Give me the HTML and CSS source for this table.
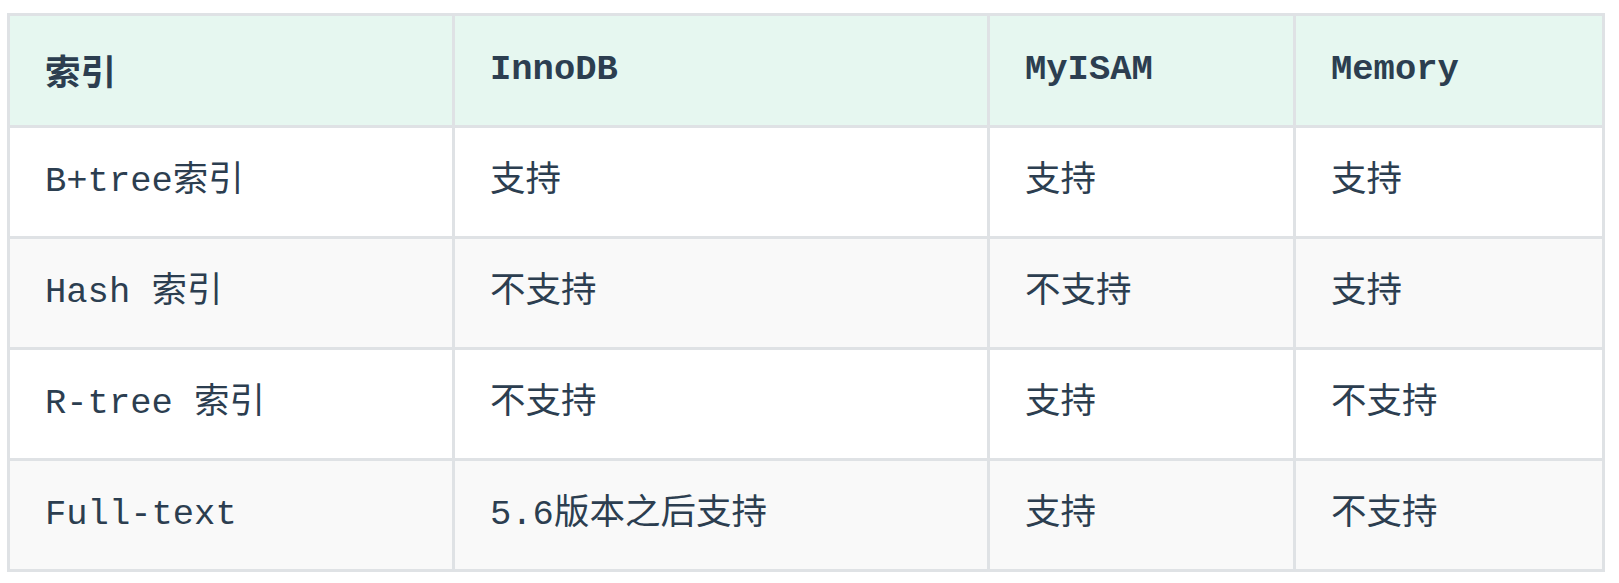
FILE: index.html
```html
<!DOCTYPE html>
<html lang="zh-CN">
<head>
<meta charset="utf-8">
<title>索引对比</title>
<link rel="stylesheet" href="styles.css">
</head>
<body>
<table class="cmp">
  <colgroup>
    <col class="c1"><col class="c2"><col class="c3"><col class="c4">
  </colgroup>
  <thead>
    <tr class="head">
      <th class="cjk">索引</th>
      <th>InnoDB</th>
      <th>MyISAM</th>
      <th>Memory</th>
    </tr>
  </thead>
  <tbody>
    <tr class="odd">
      <td>B+tree索引</td>
      <td>支持</td>
      <td>支持</td>
      <td>支持</td>
    </tr>
    <tr class="even">
      <td>Hash 索引</td>
      <td>不支持</td>
      <td>不支持</td>
      <td>支持</td>
    </tr>
    <tr class="odd">
      <td>R-tree 索引</td>
      <td>不支持</td>
      <td>支持</td>
      <td>不支持</td>
    </tr>
    <tr class="even">
      <td>Full-text</td>
      <td>5.6版本之后支持</td>
      <td>支持</td>
      <td>不支持</td>
    </tr>
  </tbody>
</table>
</body>
</html>
```

FILE: styles.css
```css
html, body {
  margin: 0;
  padding: 0;
  background: #ffffff;
}

body {
  padding: 13px 0 0 7px;
}

.cmp {
  border-collapse: separate;
  border-spacing: 0;
  table-layout: fixed;
  width: 1598px;
  border-left: 3px solid #dfe2e5;
  border-top: 3px solid #dfe2e5;
  font-family: "Courier New", "Nimbus Mono PS", "Nimbus Mono L", "FreeMono", "Liberation Mono", "Noto Sans CJK SC", monospace;
  font-size: 35.5px;
  color: #2c3e50;
}

.c1 { width: 445px; }
.c2 { width: 535px; }
.c3 { width: 306px; }
.c4 { width: 309px; }

.cmp th,
.cmp td {
  box-sizing: border-box;
  border-right: 3px solid #dfe2e5;
  border-bottom: 3px solid #dfe2e5;
  padding: 0 0 1px 35px;
  text-align: left;
  vertical-align: middle;
  line-height: 54px;
  white-space: nowrap;
}

.cmp th {
  font-weight: bold;
  height: 112px;
}

.cmp td {
  font-weight: normal;
  height: 111px;
}

.cjk {
  font-family: "Noto Sans CJK SC", sans-serif;
}

.head { background: #e6f7f0; }
.odd { background: #ffffff; }
.even { background: #f9f9f9; }
```
